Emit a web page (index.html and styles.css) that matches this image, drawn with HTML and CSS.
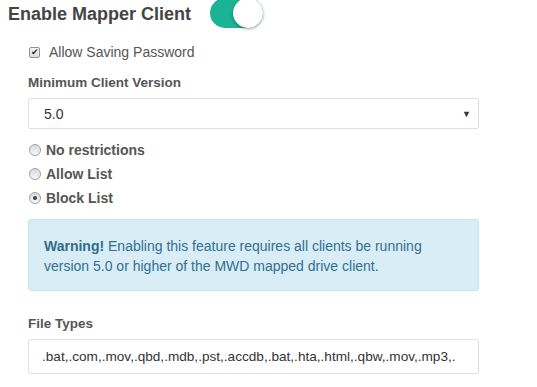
FILE: index.html
```html
<html>
<head>
    <title>Mapper Client</title>
    <link rel="stylesheet" href="styles.css">
</head>
<body>

<div id="outer">

    <div id="header">
        <span class="title">Enable Mapper Client</span>
        <span class="toggle"><span class="knob"></span></span>
    </div>

    <div class="section">
        <div class="checkrow">
            <span class="checkbox">&#10004;</span>
            <span class="checklabel">Allow Saving Password</span>
        </div>

        <div class="fieldlabel">Minimum Client Version</div>
        <div class="select">
            <span>5.0</span>
            <span class="arrow">&#9660;</span>
        </div>

        <div class="radios">
            <div class="radiorow"><span class="radio"></span>No restrictions</div>
            <div class="radiorow"><span class="radio"></span>Allow List</div>
            <div class="radiorow"><span class="radio checked"></span>Block List</div>
        </div>

        <div class="alert">
            <b>Warning!</b> Enabling this feature requires all clients be running
            <br>
            version 5.0 or higher of the MWD mapped drive client.
        </div>

        <div class="fieldlabel">File Types</div>
        <div class="input">.bat,.com,.mov,.qbd,.mdb,.pst,.accdb,.bat,.hta,.html,.qbw,.mov,.mp3,.</div>
    </div>
</div>

</body>
</html>
```

FILE: styles.css
```css
body {
    margin: 0;
    background: #ffffff;
    font-family: "Liberation Sans", Arial, sans-serif;
    font-size: 14px;
    color: #555555;
}

#outer {
    padding: 0 8px;
}

#header {
    display: flex;
    align-items: center;
    height: 28px;
}

.title {
    font-size: 18px;
    font-weight: bold;
    color: #444444;
    width: 202px;
}

.toggle {
    display: inline-block;
    position: relative;
    width: 53px;
    height: 30px;
    margin-top: -2px;
    border-radius: 15px;
    background: #1ab394;
}

.knob {
    position: absolute;
    right: 0;
    top: 0;
    width: 30px;
    height: 30px;
    border-radius: 50%;
    background: #ffffff;
    box-shadow: 0 1px 3px rgba(0, 0, 0, 0.4);
}

.section {
    padding-left: 20px;
    width: 451px;
}

.checkrow {
    display: flex;
    align-items: center;
    margin-top: 17px;
    height: 14px;
}

.checkbox {
    display: inline-block;
    width: 9px;
    height: 9px;
    border: 1px solid #8f8f8f;
    border-radius: 2px;
    background: linear-gradient(#f4f4f4, #dcdcdc);
    font-size: 9px;
    line-height: 9px;
    text-align: center;
    color: #333333;
    margin-left: 1px;
    margin-right: 9px;
}

.checklabel {
    font-size: 14px;
    color: #555555;
}

.fieldlabel {
    font-weight: bold;
    font-size: 13.5px;
    color: #555555;
    margin-top: 16px;
    height: 15px;
    line-height: 15px;
}

.select {
    display: flex;
    justify-content: space-between;
    align-items: center;
    margin-top: 8px;
    height: 29px;
    border: 1px solid #e0e0e0;
    border-radius: 2px;
    padding: 0 7px 0 15px;
    color: #333333;
    font-size: 14px;
}

.arrow {
    font-size: 9px;
    color: #333333;
}

.radios {
    margin-top: 9px;
}

.radiorow {
    display: flex;
    align-items: center;
    height: 24px;
    font-weight: bold;
    font-size: 14px;
}

.radio {
    display: inline-block;
    position: relative;
    width: 10px;
    height: 10px;
    border: 1px solid #a0a0a0;
    border-radius: 50%;
    background: linear-gradient(#d8d8d8, #f8f8f8);
    margin-left: 1px;
    margin-right: 5px;
}

.radio.checked::after {
    content: "";
    position: absolute;
    left: 3px;
    top: 3px;
    width: 4px;
    height: 4px;
    border-radius: 50%;
    background: #444444;
}

.alert {
    margin-top: 9px;
    padding: 16px 15px 14px;
    line-height: 20px;
    background: #d9edf7;
    border: 1px solid #bce8f1;
    border-radius: 3px;
    color: #31708f;
}

.alert b {
    color: #2f6c8c;
}

.section .alert + .fieldlabel {
    margin-top: 25px;
}

.input {
    margin-top: 8px;
    height: 33px;
    line-height: 33px;
    border: 1px solid #e0e0e0;
    border-radius: 2px;
    padding-left: 13px;
    color: #333333;
    font-size: 13.6px;
    white-space: nowrap;
    overflow: hidden;
}
```
